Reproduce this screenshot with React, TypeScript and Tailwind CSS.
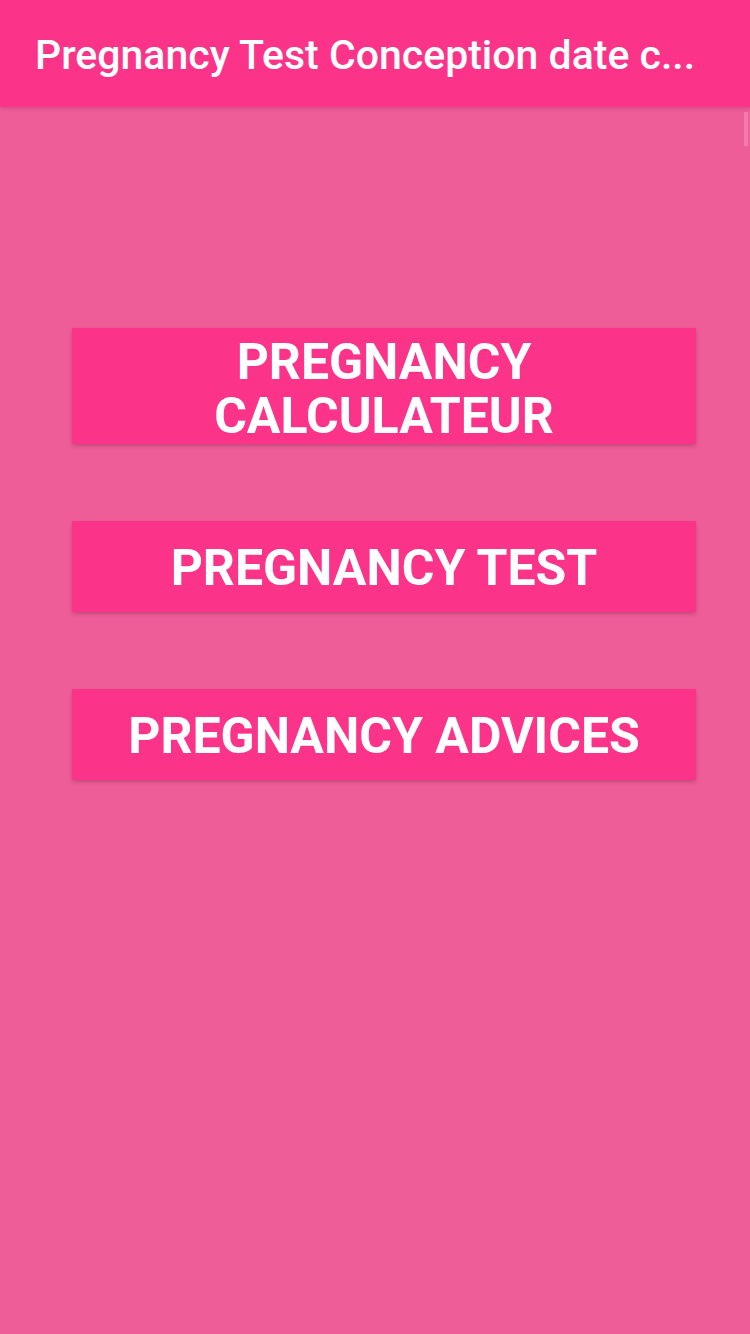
export default function App() {
  const font = { fontFamily: 'Roboto, "Noto Sans", sans-serif' };
  return (
    <div className="relative w-[750px] h-[1334px] bg-[#ef5d98] flex flex-col overflow-hidden" style={font}>
      <div className="h-[107px] bg-[#fb3489] flex items-center pl-[35px] pr-[20px] pt-[4px] shadow-[0_2px_4px_rgba(0,0,0,0.12)] z-10">
        <div className="text-white text-[41px] font-medium whitespace-nowrap leading-none">
          Pregnancy Test Conception date c...
        </div>
      </div>
      <div className="absolute right-[2px] top-[112px] w-[4px] h-[34px] bg-[#f47aab]" />
      <div className="flex flex-col pl-[72px] pt-[221px] gap-[77px]">
        <div className="w-[624px] h-[116px] bg-[#fb3489] shadow-[0_2px_4px_rgba(0,0,0,0.2)] flex items-center justify-center text-center text-white font-bold text-[50px] leading-[54px] pt-[5px]">
          PREGNANCY<br />CALCULATEUR
        </div>
        <div className="w-[624px] h-[91px] bg-[#fb3489] shadow-[0_2px_4px_rgba(0,0,0,0.2)] flex items-center justify-center text-white font-bold text-[50px] leading-none pt-[2px]">
          PREGNANCY TEST
        </div>
        <div className="w-[624px] h-[91px] bg-[#fb3489] shadow-[0_2px_4px_rgba(0,0,0,0.2)] flex items-center justify-center text-white font-bold text-[50px] leading-none pt-[2px]">
          PREGNANCY ADVICES
        </div>
      </div>
    </div>
  );
}
